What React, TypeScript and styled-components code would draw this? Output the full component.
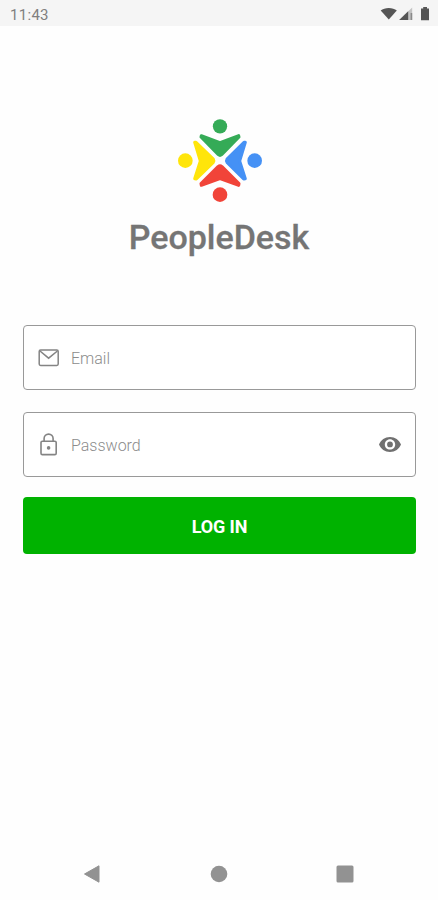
import React from "react";
import styled, { createGlobalStyle } from "styled-components";

const GlobalStyle = createGlobalStyle`
  * { box-sizing: border-box; }
  body { margin: 0; background: #fefefe; font-family: Roboto, sans-serif; }
`;

const Screen = styled.div`
  height: 900px;
  display: flex;
  flex-direction: column;
  background: #fefefe;
  overflow: hidden;
`;

const StatusBar = styled.header`
  height: 26px;
  flex: none;
  display: flex;
  align-items: center;
  justify-content: space-between;
  padding: 3px 8px 0 10px;
  background: #f5f5f5;
  color: #808080;
  font-size: 15px;
  letter-spacing: 0.3px;
`;

const StatusIcons = styled.svg`
  display: block;
  width: 50px;
  height: 16px;
`;

const Brand = styled.section`
  display: flex;
  flex-direction: column;
  align-items: center;
  padding-top: 84px;
  height: 299px;
  flex: none;
`;

const Logo = styled.svg`
  display: block;
  width: 100px;
  height: 100px;
  margin-left: 2px;
`;

const Title = styled.h1`
  margin: 6px 0 0;
  font-size: 34px;
  line-height: 42px;
  font-weight: 500;
  color: #757575;
  -webkit-text-stroke: 0.3px #757575;
`;

const Form = styled.form`
  display: flex;
  flex-direction: column;
  padding: 0 22px 0 23px;
`;

const Field = styled.label`
  height: 65px;
  display: flex;
  align-items: center;
  padding: 0 13px 0 14px;
  margin-bottom: 22px;
  border: 1px solid #999;
  border-radius: 4px;
  background: #fff;
`;

const Icon = styled.svg`
  display: block;
  flex: none;
`;

const Input = styled.input`
  flex: 1;
  min-width: 0;
  margin-left: 11px;
  padding: 1px 0 0;
  border: 0;
  outline: 0;
  background: transparent;
  font: 300 16px Roboto, sans-serif;
  color: #757575;
  &::placeholder { color: #8c8c8c; opacity: 1; }
`;

const LoginButton = styled.button`
  height: 57px;
  margin-top: -2px;
  padding: 1px 0 0;
  border: 0;
  border-radius: 4px;
  background: #00b200;
  color: #fff;
  font: 700 18px Roboto, sans-serif;
  letter-spacing: -0.1px;
`;

const NavBar = styled.nav`
  margin-top: auto;
  height: 52px;
  display: flex;
  align-items: center;
  justify-content: space-between;
  padding: 0 84px 0 83px;
`;

export default function App() {
  return (
    <>
      <GlobalStyle />
      <Screen>
        <StatusBar>
          <span>11:43</span>
          <StatusIcons viewBox="0 0 50 16">
            <path d="M.7 3.5C4.5 0 13 0 16.8 3.5L8.8 12.5Z" fill="#555" />
            <path d="M32.2.5V13H19.2Z" fill="#c4c4c4" />
            <path d="M28.2 4.3V13H19.2Z" fill="#555" />
            <path d="M30.6 6h1.6v7h-1.6z" fill="#8a8a8a" />
            <path d="M43.2 0h3.8v1.5h2V13.2h-8V1.5h2.2z" fill="#555" />
          </StatusIcons>
        </StatusBar>
        <Brand>
          <Logo viewBox="0 0 300 300">
            <g fill="#35ab57" stroke="#35ab57">
              <circle cx="150" cy="49" r="21.5" stroke="none" />
              <path d="M94 77L150 98L206 77L207 81L155 134Q150 138 145 134L93 81Z" strokeWidth="9" strokeLinejoin="round" />
            </g>
            <g fill="#ffe50a" stroke="#ffe50a">
              <circle cx="46" cy="152" r="22" stroke="none" />
              <path d="M74 97L91 153L74 206L79 207L130 157Q133 152 130 147L78 97Z" strokeWidth="9" strokeLinejoin="round" />
            </g>
            <g fill="#4591f5" stroke="#4591f5">
              <circle cx="254" cy="152" r="22" stroke="none" />
              <path d="M226 97L209 153L226 206L221 207L171 157Q168 152 171 147L222 97Z" strokeWidth="9" strokeLinejoin="round" />
            </g>
            <g fill="#f14439" stroke="#f14439">
              <circle cx="150" cy="254" r="22" stroke="none" />
              <path d="M94 226L150 206L206 226L207 221L156 170Q150 165 144 170L93 221Z" strokeWidth="9" strokeLinejoin="round" />
            </g>
          </Logo>
          <Title>PeopleDesk</Title>
        </Brand>
        <Form onSubmit={(e) => e.preventDefault()}>
          <Field>
            <Icon width="22" height="22" viewBox="0 0 22 22" fill="none" stroke="#848484" strokeWidth="1.5">
              <rect x="1.2" y="3" width="19" height="15.4" rx="1.4" />
              <path d="M2 4L10.6 11.2L19.4 4" />
            </Icon>
            <Input type="email" placeholder="Email" />
          </Field>
          <Field>
            <Icon width="22" height="24" viewBox="0 0 22 24" fill="none" stroke="#848484" strokeWidth="1.6">
              <rect x="3" y="8.2" width="15.2" height="13.4" rx="1.4" />
              <path d="M6.1 8.2V5.6a4.5 4.5 0 0 1 9 0v2.6" />
              <circle cx="10.6" cy="14.9" r="1.8" fill="#848484" stroke="none" />
            </Icon>
            <Input type="password" placeholder="Password" />
            <Icon width="24" height="24" viewBox="0 .6 24 24" fill="#707070">
              <path d="M12 4.5C7 4.5 2.73 7.61 1 12c1.73 4.39 6 7.5 11 7.5s9.27-3.11 11-7.5c-1.73-4.39-6-7.5-11-7.5zM12 17.2c-2.87 0-5.2-2.33-5.2-5.2s2.33-5.2 5.2-5.2 5.2 2.33 5.2 5.2-2.33 5.2-5.2 5.2zm0-8.1a2.9 2.9 0 1 0 0 5.8 2.9 2.9 0 0 0 0-5.8z" />
            </Icon>
          </Field>
          <LoginButton>LOG IN</LoginButton>
        </Form>
        <NavBar>
          <Icon width="18" height="20" viewBox="0 0 18 20">
            <path d="M1.5 10L16 1.8V18.2Z" fill="#929292" stroke="#929292" strokeWidth="1" strokeLinejoin="round" />
          </Icon>
          <Icon width="18" height="18" viewBox="0 0 18 18">
            <circle cx="9" cy="9" r="8.3" fill="#929292" />
          </Icon>
          <Icon width="18" height="18" viewBox="0 0 18 18">
            <rect x=".5" y=".5" width="17" height="17" rx="1.5" fill="#929292" />
          </Icon>
        </NavBar>
      </Screen>
    </>
  );
}
